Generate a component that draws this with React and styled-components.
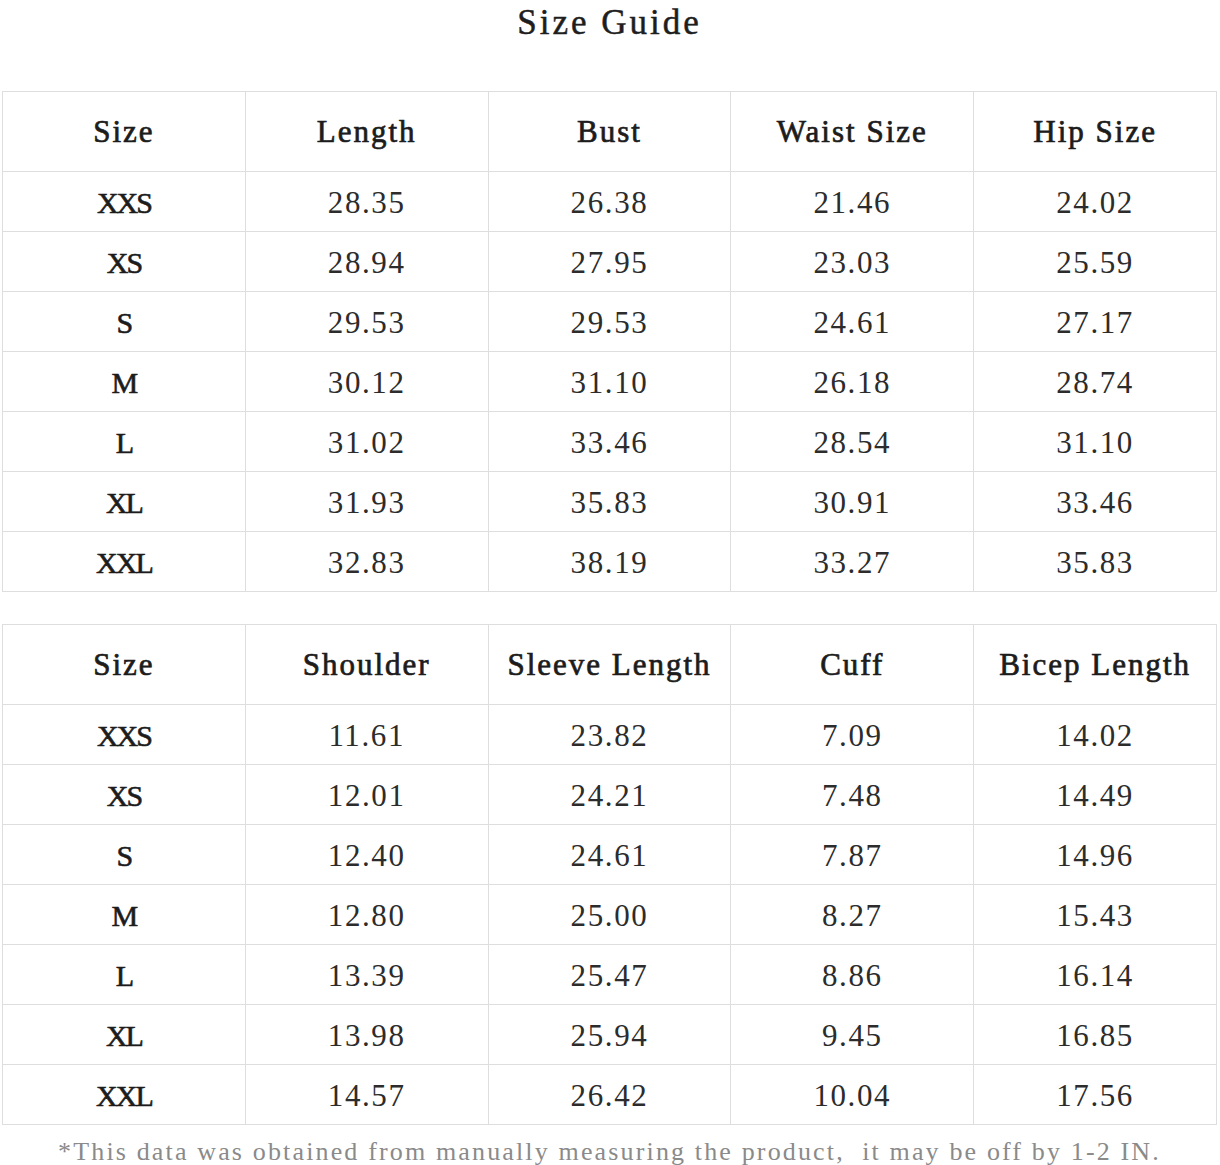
import React from "react";
import styled, { createGlobalStyle } from "styled-components";

const GlobalStyle = createGlobalStyle`
  html, body {
    margin: 0;
    padding: 0;
    background: #ffffff;
  }
  body {
    font-family: "Liberation Serif", "DejaVu Serif", serif;
    color: #222;
  }
`;

const Page = styled.div`
  width: 1220px;
  height: 1165px;
  overflow: hidden;
  padding: 0 3px 0 2px;
  box-sizing: border-box;
`;

const Title = styled.h1`
  margin: 0;
  height: 91px;
  padding-top: 3px;
  box-sizing: border-box;
  text-align: center;
  font-size: 35px;
  font-weight: normal;
  letter-spacing: 3px;
  line-height: 40px;
  color: #1e1e1e;
  -webkit-text-stroke: 0.5px #1e1e1e;
`;

const Table = styled.div`
  display: grid;
  grid-template-columns: repeat(5, 1fr);
  grid-template-rows: 80px repeat(7, 60px);
  border-top: 1px solid #dedede;
  border-left: 1px solid #dedede;
  margin-bottom: ${({ $gap }) => $gap}px;
`;

const Cell = styled.div`
  display: flex;
  align-items: center;
  justify-content: center;
  border-right: 1px solid #dedede;
  border-bottom: 1px solid #dedede;
  white-space: nowrap;
  box-sizing: border-box;
  font-size: 31px;
  letter-spacing: 1.6px;
  color: #2c2c2c;
  padding-top: 2px;
`;

const HeadCell = styled(Cell)`
  font-size: 31px;
  letter-spacing: 2px;
  color: #1c1c1c;
  -webkit-text-stroke: 0.7px #1c1c1c;
  padding-top: 0;
`;

const SizeCell = styled(Cell)`
  font-size: 30px;
  letter-spacing: -2px;
  color: #1c1c1c;
  -webkit-text-stroke: 0.6px #1c1c1c;
`;

const Note = styled.p`
  margin: 0;
  text-align: center;
  font-size: 26px;
  letter-spacing: 2.15px;
  color: #8a8a8a;
  line-height: 54px;
  white-space: pre;
`;

const sizes = ["XXS", "XS", "S", "M", "L", "XL", "XXL"];

const bodyTable = {
  head: ["Size", "Length", "Bust", "Waist Size", "Hip Size"],
  rows: [
    ["28.35", "26.38", "21.46", "24.02"],
    ["28.94", "27.95", "23.03", "25.59"],
    ["29.53", "29.53", "24.61", "27.17"],
    ["30.12", "31.10", "26.18", "28.74"],
    ["31.02", "33.46", "28.54", "31.10"],
    ["31.93", "35.83", "30.91", "33.46"],
    ["32.83", "38.19", "33.27", "35.83"],
  ],
};

const sleeveTable = {
  head: ["Size", "Shoulder", "Sleeve Length", "Cuff", "Bicep Length"],
  rows: [
    ["11.61", "23.82", "7.09", "14.02"],
    ["12.01", "24.21", "7.48", "14.49"],
    ["12.40", "24.61", "7.87", "14.96"],
    ["12.80", "25.00", "8.27", "15.43"],
    ["13.39", "25.47", "8.86", "16.14"],
    ["13.98", "25.94", "9.45", "16.85"],
    ["14.57", "26.42", "10.04", "17.56"],
  ],
};

function SizeTable({ data, gap }) {
  return (
    <Table $gap={gap}>
      {data.head.map((h) => (
        <HeadCell key={h}>{h}</HeadCell>
      ))}
      {data.rows.map((row, i) => (
        <React.Fragment key={sizes[i]}>
          <SizeCell>{sizes[i]}</SizeCell>
          {row.map((v, j) => (
            <Cell key={j}>{v}</Cell>
          ))}
        </React.Fragment>
      ))}
    </Table>
  );
}

export default function App() {
  return (
    <>
      <GlobalStyle />
      <Page>
        <Title>Size Guide</Title>
        <SizeTable data={bodyTable} gap={32} />
        <SizeTable data={sleeveTable} gap={0} />
        <Note>{"*This data was obtained from manually measuring the product,  it may be off by 1-2 IN."}</Note>
      </Page>
    </>
  );
}
